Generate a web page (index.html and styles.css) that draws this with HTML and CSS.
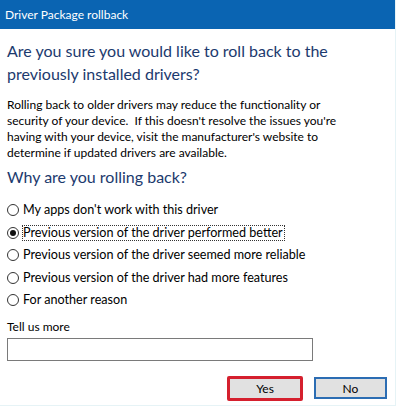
FILE: index.html
```html
<!DOCTYPE html>
<html lang="en">
<head>
    <meta charset="UTF-8">
    <meta name="viewport" content="width=device-width, initial-scale=1.0">
    <title>Driver Package rollback</title>
    <link rel="stylesheet" href="styles.css">
</head>
<body>
    <div class="window">
        <div class="titlebar">Driver Package rollback</div>
        <div class="content">
            <h1>Are you sure you would like to roll back to the previously installed drivers?</h1>
            <p class="info">Rolling back to older drivers may reduce the functionality or security of your device.&nbsp; If this doesn't resolve the issues you're having with your device, visit the manufacturer's website to determine if updated drivers are available.</p>
            <h2>Why are you rolling back?</h2>
            <div class="options">
                <label class="option"><span class="radio"></span><span class="label">My apps don't work with this driver</span></label>
                <label class="option"><span class="radio checked"></span><span class="label focused">Previous version of the driver performed better</span></label>
                <label class="option"><span class="radio"></span><span class="label">Previous version of the driver seemed more reliable</span></label>
                <label class="option"><span class="radio"></span><span class="label">Previous version of the driver had more features</span></label>
                <label class="option"><span class="radio"></span><span class="label">For another reason</span></label>
            </div>
            <div class="more">Tell us more</div>
            <div class="textbox"></div>
            <div class="buttons">
                <button class="btn yes">Yes</button>
                <button class="btn no">No</button>
            </div>
        </div>
    </div>
</body>
</html>
```

FILE: styles.css
```css
body {
    margin: 0;
    font-family: Lato, "Open Sans", sans-serif;
    color: #000;
    background: #fff;
}
.window {
    width: 395px;
    height: 405px;
    border-right: 1px solid #e6f3f6;
    border-bottom: 1px solid #e6f3f6;
}
.titlebar {
    height: 29px;
    line-height: 29px;
    background-color: #0a64b2;
    color: #fff;
    font-size: 12px;
    padding-left: 5px;
}
.content {
    padding: 0 7px;
}
h1, h2 {
    font-weight: normal;
    color: #1c3a6e;
    font-size: 16px;
    line-height: 23px;
    margin: 0;
}
h1 {
    margin-top: 10px;
    max-width: 335px;
}
.info {
    font-size: 12px;
    line-height: 16px;
    margin: 12px 0 0;
    max-width: 335px;
}
h2 {
    margin-top: 4px;
}
.options {
    margin-top: 11px;
    display: flex;
    flex-direction: column;
}
.option {
    display: flex;
    align-items: center;
    height: 22.5px;
    font-size: 12.6px;
}
.radio {
    width: 12px;
    height: 12px;
    border: 1px solid #333;
    border-radius: 50%;
    margin-right: 3px;
    box-sizing: border-box;
    position: relative;
    flex-shrink: 0;
}
.radio.checked::after {
    content: "";
    position: absolute;
    left: 2px;
    top: 2px;
    width: 6px;
    height: 6px;
    border-radius: 50%;
    background: #111;
}
.label {
    line-height: 14px;
    padding-right: 1px;
    border: 1px solid transparent;
}
.label.focused {
    border: 1px dotted #333;
}
.more {
    margin-top: 7px;
    font-size: 12px;
    line-height: 16px;
}
.textbox {
    margin-top: 3px;
    width: 306px;
    height: 23px;
    border: 1px solid #7a7a7a;
    box-sizing: border-box;
}
.buttons {
    display: flex;
    justify-content: flex-end;
    align-items: center;
    gap: 11px;
    margin-top: 15px;
    padding-right: 1px;
}
.btn {
    font-family: inherit;
    font-size: 12px;
    background: #e1e1e1;
    color: #000;
    height: 22px;
    width: 73px;
    box-sizing: border-box;
    padding: 0;
}
.btn.yes {
    width: 76px;
    height: 25px;
    border: 3px solid #d5202e;
    border-radius: 2px;
}
.btn.no {
    border: 2px solid #2c6db3;
}
```
